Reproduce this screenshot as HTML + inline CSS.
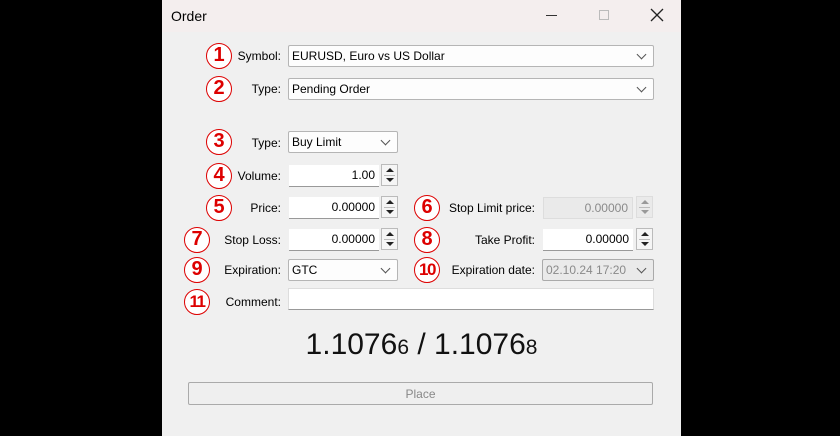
<!DOCTYPE html><html><head><style>
*{box-sizing:border-box;margin:0;padding:0}
body{width:840px;height:436px;background:#000;position:relative;overflow:hidden;font-family:"Liberation Sans",sans-serif;font-size:12px;color:#000}
.dlg{position:absolute;left:162px;top:0;width:519px;height:436px;background:#f0f0f0}
.tb{position:absolute;left:162px;top:0;width:519px;height:32px;background:#f4eeee}
.a{position:absolute}
.c{position:absolute;width:26px;height:26px;border:1.5px solid #d00;border-radius:50%;background:#fff;color:#d00;font-weight:bold;font-size:20px;text-align:center;line-height:23px}
.c.s{font-size:17px;letter-spacing:-1.5px}
.l{position:absolute;width:120px;text-align:right;line-height:23px}
.f{position:absolute;background:#fff;border:1px solid #bcbcbc;border-bottom-color:#8a8a8a;height:22px;line-height:21px;padding-left:3px;white-space:nowrap}
.n{text-align:right;padding-right:4px;border:none;border-bottom:1px solid #999}
.cb{background:#fdfdfd;border:1px solid #b5b5b5;border-radius:2px}
.cb:after{content:"";position:absolute;right:8px;top:5px;width:6px;height:6px;border-right:1px solid #555;border-bottom:1px solid #555;transform:rotate(45deg)}
.sp{position:absolute;width:17px;height:22px;border:1px solid #bbb;background:#f5f5f5}
.sp:before{content:"";position:absolute;left:4px;top:3px;border:4px solid transparent;border-bottom:4px solid #222;border-top:0}
.sp:after{content:"";position:absolute;left:4px;bottom:3px;border:4px solid transparent;border-top:4px solid #222;border-bottom:0}
.sp i{position:absolute;left:2px;right:2px;top:10px;border-top:1px solid #bbb}
.dis{background:#eaeaea;color:#8a8a8a;border-color:#ddd}
.sp.dis:before{border-bottom-color:#999}.sp.dis:after{border-top-color:#999}
</style></head><body>
<div class="dlg"></div><div class="tb"></div>
<div class="a" style="left:171px;top:8px;font-size:14px">Order</div>
<div class="a" style="left:546px;top:15px;width:11px;border-top:1px solid #333"></div>
<div class="a" style="left:599px;top:10px;width:10px;height:10px;border:1px solid #bbb"></div>
<svg class="a" style="left:650px;top:8px" width="14" height="14"><path d="M1 1L13 13M13 1L1 13" stroke="#222" stroke-width="1.3"/></svg>

<div class="c" style="left:206px;top:43px">1</div>
<div class="c" style="left:206px;top:76px">2</div>
<div class="c" style="left:206px;top:129px">3</div>
<div class="c" style="left:206px;top:163px">4</div>
<div class="c" style="left:206px;top:195px">5</div>
<div class="c" style="left:414px;top:195px">6</div>
<div class="c" style="left:184px;top:227px">7</div>
<div class="c" style="left:414px;top:227px">8</div>
<div class="c" style="left:184px;top:257px">9</div>
<div class="c s" style="left:414px;top:257px">10</div>
<div class="c s" style="left:184px;top:289px">11</div>

<div class="l" style="left:161px;top:45px">Symbol:</div>
<div class="l" style="left:161px;top:78px">Type:</div>
<div class="l" style="left:161px;top:132px">Type:</div>
<div class="l" style="left:161px;top:165px">Volume:</div>
<div class="l" style="left:161px;top:197px">Price:</div>
<div class="l" style="left:161px;top:229px">Stop Loss:</div>
<div class="l" style="left:161px;top:259px">Expiration:</div>
<div class="l" style="left:161px;top:291px">Comment:</div>
<div class="l" style="left:415px;top:197px">Stop Limit price:</div>
<div class="l" style="left:415px;top:229px">Take Profit:</div>
<div class="l" style="left:415px;top:259px">Expiration date:</div>

<div class="f cb" style="left:288px;top:45px;width:366px">EURUSD, Euro vs US Dollar</div>
<div class="f cb" style="left:288px;top:78px;width:366px">Pending Order</div>
<div class="f cb" style="left:288px;top:131px;width:110px">Buy Limit</div>
<div class="f n" style="left:289px;top:165px;width:90px">1.00</div><div class="sp" style="left:381px;top:164px"><i></i></div>
<div class="f n" style="left:289px;top:197px;width:90px">0.00000</div><div class="sp" style="left:381px;top:196px"><i></i></div>
<div class="f n" style="left:289px;top:229px;width:90px">0.00000</div><div class="sp" style="left:381px;top:228px"><i></i></div>
<div class="f cb" style="left:288px;top:259px;width:110px">GTC</div>
<div class="f" style="left:288px;top:288px;width:366px;border-color:#ddd #ddd #999"></div>
<div class="f n dis" style="left:543px;top:197px;width:90px;border:1px solid #ddd">0.00000</div><div class="sp dis" style="left:636px;top:196px"><i></i></div>
<div class="f n" style="left:543px;top:229px;width:90px">0.00000</div><div class="sp" style="left:636px;top:228px"><i></i></div>
<div class="f cb dis" style="left:542px;top:259px;width:112px;border-color:#aaa">02.10.24 17:20</div>

<div class="a" style="left:162px;top:328px;width:519px;text-align:center;font-size:30px;color:#111">1.1076<span style="font-size:21px">6</span> / 1.1076<span style="font-size:21px">8</span></div>
<div class="a" style="left:188px;top:382px;width:465px;height:23px;border:1px solid #aaa;border-radius:2px;background:#efefef;text-align:center;line-height:22px;color:#888">Place</div>
</body></html>
